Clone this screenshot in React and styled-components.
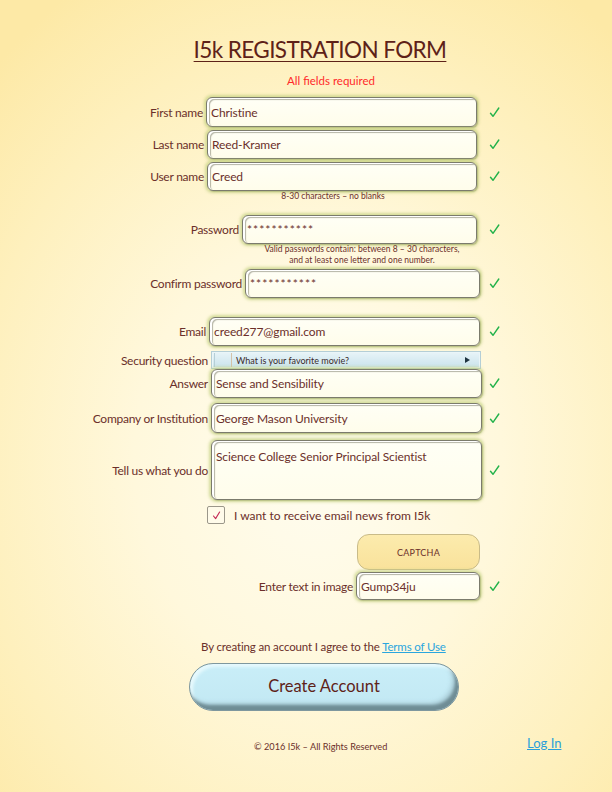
import React from 'react';
import styled, { createGlobalStyle } from 'styled-components';

const GlobalStyle = createGlobalStyle`
    html, body {
        margin: 0;
        padding: 0;
    }
    body {
        background: radial-gradient(ellipse 75% 70% at 52% 58%, #fffdf1 0%, #fff8dc 40%, #fef0bd 75%, #fde9a6 100%);
        min-height: 792px;
        font-family: Lato, "Open Sans", sans-serif;
        color: #6b2f2a;
    }
`

const Page = styled.div`
    width: 612px;
    height: 792px;
    overflow: hidden;
`

const Title = styled.h1`
    margin: 36px 0 0;
    padding-left: 28px;
    text-align: center;
    font-size: 22.5px;
    line-height: 28px;
    font-weight: 400;
    color: #5e2218;
    text-decoration: underline;
    text-decoration-thickness: 1px;
    text-underline-offset: 3px;
    letter-spacing: -0.6px;
`

const Required = styled.div`
    margin: 9px 0 0 281px;
    width: 100px;
    text-align: center;
    font-size: 11.5px;
    line-height: 16px;
    color: #ff2a2a;
    white-space: nowrap;
`

const Row = styled.div`
    display: flex;
    align-items: center;
    margin-top: ${p => p.$top}px;
    height: ${p => p.$h}px;
`

const Label = styled.label`
    width: ${p => p.$w}px;
    padding-right: 3px;
    box-sizing: border-box;
    text-align: right;
    font-size: 12px;
    letter-spacing: -0.25px;
    white-space: nowrap;
`

const Field = styled.div`
    box-sizing: border-box;
    width: ${p => p.$w}px;
    height: 100%;
    display: flex;
    align-items: ${p => (p.$multi ? 'flex-start' : 'center')};
    padding: ${p => (p.$multi ? '8px 4px' : '0 4px')};
    background: linear-gradient(#fffff6, #fffdeb);
    border: 1px solid #7b7b6c;
    border-radius: 6px;
    box-shadow:
        0 0 3px 2px rgba(196, 210, 130, 0.75),
        1px 1px 1px rgba(60, 60, 40, 0.45),
        inset 2px 1px 0 #ffffff,
        inset 3px 2px 1px rgba(90, 90, 70, 0.45);
    font-size: 12px;
    letter-spacing: -0.1px;
    color: #6b2f2a;
    white-space: nowrap;
    letter-spacing: ${p => (p.$secret ? '1px' : '-0.1px')};
`

const Check = styled.svg`
    margin-left: ${p => p.$ml}px;
    flex: none;
`

const Hint = styled.div`
    margin-left: ${p => p.$x}px;
    width: ${p => p.$w}px;
    text-align: center;
    font-size: 8.5px;
    line-height: 11px;
    white-space: nowrap;
`

const Select = styled.div`
    box-sizing: border-box;
    width: 270px;
    height: 100%;
    display: flex;
    align-items: center;
    background: linear-gradient(#e8f4f8, #c9e3ec);
    border: 1px solid #b4ced6;
    box-shadow: inset 0 0 0 1px #eaf5f8;
    font-size: 9px;
    color: #3a2a2a;
`

const SelectHandle = styled.span`
    width: 16px;
    height: 14px;
    margin-left: 2px;
    border-right: 1px solid #d3c2a8;
    border-left: 1px solid #b6cfd7;
`

const SelectText = styled.span`
    flex: 1;
    padding-left: 4px;
`

const Arrow = styled.span`
    width: 0;
    height: 0;
    margin-right: 10px;
    border-top: 3.5px solid transparent;
    border-bottom: 3.5px solid transparent;
    border-left: 5px solid #1f3440;
`

const Box = styled.span`
    box-sizing: border-box;
    width: 18px;
    height: 18px;
    margin-left: 207px;
    display: flex;
    align-items: center;
    justify-content: center;
    background: #fffbea;
    border: 1px solid #9b978a;
    border-radius: 2px;
`

const BoxText = styled.span`
    margin-left: 9px;
    font-size: 12px;
    white-space: nowrap;
`

const Captcha = styled.div`
    box-sizing: border-box;
    margin-left: 357px;
    width: 123px;
    height: 100%;
    display: flex;
    align-items: center;
    justify-content: center;
    background: linear-gradient(#fcebad, #f9e29b);
    border: 1px solid #c9bb88;
    border-radius: 12px;
    font-size: 9px;
    letter-spacing: 0.2px;
`

const Terms = styled.div`
    margin: 39px 0 0 201px;
    font-size: 11.5px;
    letter-spacing: -0.15px;
    line-height: 16px;
    white-space: nowrap;
`

const Link = styled.a`
    color: ${p => p.$color || '#2aa6de'};
    text-decoration: underline;
    font-size: ${p => p.$size || 11.5}px;
`

const Button = styled.button`
    display: block;
    box-sizing: border-box;
    margin: 8px 0 0 189px;
    width: 270px;
    height: 48px;
    border-radius: 24px;
    border: 1px solid #7e979e;
    background: linear-gradient(#c9eef8, #c2e8f3);
    box-shadow:
        inset -3px -5px 3px #6f8d95,
        inset 3px 3px 3px #e6f9fd,
        inset -6px -7px 4px rgba(120, 150, 160, 0.35);
    font-family: Lato, "Open Sans", sans-serif;
    font-size: 16.5px;
    color: #5e2218;
    padding: 0 0 3px;
`

const Footer = styled.div`
    display: flex;
    align-items: center;
    margin-top: 22px;
    height: 20px;
`

const Copy = styled.span`
    box-sizing: border-box;
    width: 527px;
    padding-left: 254px;
    margin-top: 7px;
    font-size: 9.2px;
    white-space: nowrap;
`

const Tick = ({ ml }) => (
    <Check $ml={ml} width="11" height="11" viewBox="0 0 11 11">
        <path d="M1.5 6.2 L4 9.3 L9.8 1" fill="none" stroke="#22b24a" strokeWidth="1.4" strokeLinecap="round" strokeLinejoin="round" />
    </Check>
);

const FieldRow = ({ label, x, w, h, top, value, secret, multi }) => (
    <Row $top={top} $h={h}>
        <Label $w={x}>{label}</Label>
        <Field $w={w} $secret={secret} $multi={multi}>{value}</Field>
        <Tick ml={489 - x - w} />
    </Row>
);

export default function App() {
    return (
        <Page>
            <GlobalStyle />
            <Title>I5k REGISTRATION FORM</Title>
            <Required>All fields required</Required>

            <FieldRow label="First name" x={206} w={271} h={30} top={8} value="Christine" />
            <FieldRow label="Last name" x={207} w={270} h={29} top={3} value="Reed-Kramer" />
            <FieldRow label="User name" x={207} w={270} h={29} top={3} value="Creed" />
            <Hint $x={280} $w={106}>8-30 characters – no blanks</Hint>

            <FieldRow label="Password" x={242} w={235} h={29} top={13} value="***********" secret />
            <Hint $x={262} $w={200}>
                Valid passwords contain: between 8 – 30 characters,<br />
                and at least one letter and one number.
            </Hint>
            <FieldRow label="Confirm password" x={245} w={235} h={29} top={3} value="***********" secret />

            <FieldRow label="Email" x={209} w={271} h={29} top={19} value="creed277@gmail.com" />
            <Row $top={5} $h={18}>
                <Label $w={211}>Security question</Label>
                <Select>
                    <SelectHandle />
                    <SelectText>What is your favorite movie?</SelectText>
                    <Arrow />
                </Select>
            </Row>
            <FieldRow label="Answer" x={211} w={271} h={29} top={0} value="Sense and Sensibility" />
            <FieldRow label="Company or Institution" x={211} w={271} h={30} top={5} value="George Mason University" />
            <FieldRow label="Tell us what you do" x={211} w={271} h={60} top={7} value="Science College Senior Principal Scientist" multi />

            <Row $top={6} $h={18}>
                <Box>
                    <svg width="9" height="9" viewBox="0 0 9 9">
                        <path d="M1.5 5 L3.6 7.6 L7.6 1" fill="none" stroke="#c42a55" strokeWidth="1.1" strokeLinecap="round" strokeLinejoin="round" />
                    </svg>
                </Box>
                <BoxText>I want to receive email news from I5k</BoxText>
            </Row>

            <Row $top={10} $h={36}>
                <Captcha>CAPTCHA</Captcha>
            </Row>
            <FieldRow label="Enter text in image" x={356} w={124} h={28} top={2} value="Gump34ju" />

            <Terms>
                By creating an account I agree to the <Link href="#">Terms of Use</Link>
            </Terms>
            <Button type="button">Create Account</Button>

            <Footer>
                <Copy>© 2016 I5k – All Rights Reserved</Copy>
                <Link href="#" $size={13} $color="#2a9fdb">Log In</Link>
            </Footer>
        </Page>
    );
}
